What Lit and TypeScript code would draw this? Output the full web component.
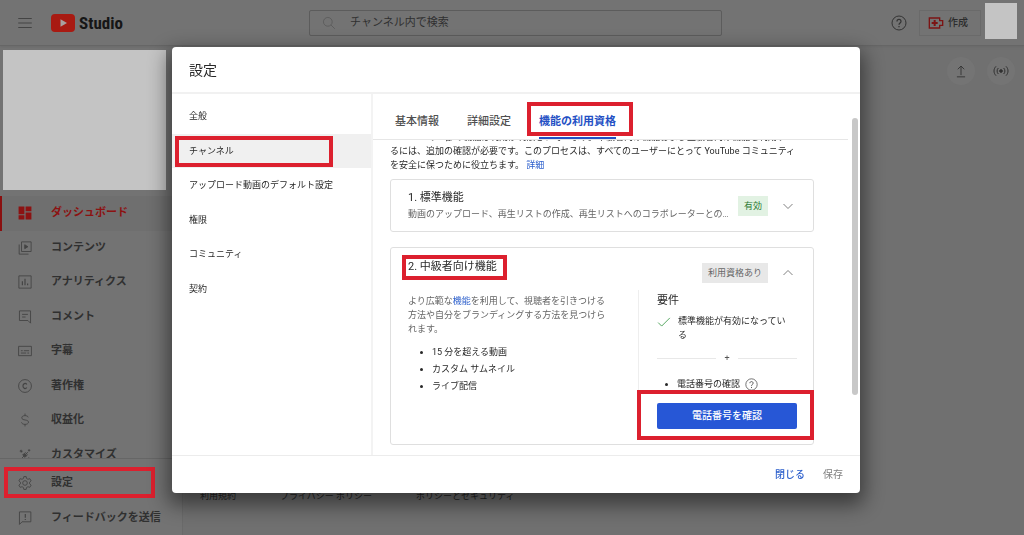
import { LitElement, html, css, svg } from "lit";
import { customElement, query, state } from "lit/decorators.js";
import { classMap } from "lit/directives/class-map.js";
import { styleMap } from "lit/directives/style-map.js";

const icons: Record<string, unknown> = {
  menu: svg`<path d="M3 6h18M3 12h18M3 18h18"/>`,
  search: svg`<circle cx="10" cy="10" r="7.5"/><path d="M15.500 15.500l6.500 6.500"/>`,
  dashboard: svg`<path fill="currentColor" stroke="none" d="M1 1h10v13H1zM13 1h10v8h-10zM1 16h10v7H1zM13 11h10v12h-10z"/>`,
  content: svg`<path d="M6 1.500h16.500v16.500H6z"/><path d="M2 6v16.500H18"/><path fill="currentColor" d="M11.500 6.500l5.500 3.300-5.500 3.300z"/>`,
  analytics: svg`<path d="M1.500 1.500h21v21h-21z"/><path stroke-width="2" d="M7.500 17.500v-7M12 17.500v-11M16.500 17.500v-3"/>`,
  comment: svg`<path d="M2.500 1.500h19v21l-4.500-4.500H2.500z"/><path d="M7 7.500h10M7 12h6"/>`,
  subtitles: svg`<path d="M1 4h22v16H1z"/><path d="M5 11.500h3M10 11.500h9M5 15.500h9M16 15.500h3"/>`,
  copyright: svg`<circle cx="12" cy="12" r="11"/><path stroke-width="2" d="M15 9.500c-2-3.500-6.500-1.500-6.500 2.500s4.500 6 6.500 2.500"/>`,
  dollar: svg`<path d="M17.500 7.500c-.5-2-2.500-3-5.500-3-3.500 0-5.500 1.500-5.500 3.800 0 5.200 11.500 2.200 11.500 7.400 0 2.300-2.500 3.800-6 3.800-3.200 0-5.500-1.200-6-3.500M12 1v3.500M12 19.500V23"/>`,
  wand: svg`<path d="M2.500 21.500L17 7M12.500 7.500l4 4M4 4l3 3M5.500 3v5M3 5.500h5M19 2v4M17 4h4M18.500 16v5M16 18.500h5"/><path fill="currentColor" d="M11 9l4 4-3 3-4-4z"/>`,
  gear: svg`<path d="M10 1h4l.7 3.300 2.300 1.300 3.300-1 2.200 3.700-2.600 2.300v2.800l2.600 2.300-2.200 3.700-3.300-1-2.300 1.300-.7 3.300h-4l-.7-3.300L7 18.400l-3.300 1-2.200-3.700 2.600-2.300v-2.800L1.500 8.300l2.200-3.700 3.300 1 2.300-1.300z"/><circle cx="12" cy="12" r="4"/>`,
  feedback: svg`<path d="M2.500 1.500h19.500v17H7l-4.500 4.500z"/><path stroke-width="2" d="M12.500 5v6.500M12.500 13.500v2"/>`,
  help: svg`<circle cx="12" cy="12" r="10.500"/><path stroke-width="1.800" d="M9 9.600c0-4 6-4 6 0 0 2.200-3 2.400-3 4.900M12 16.500v2"/>`,
  create: svg`<path stroke-width="2" d="M2 4.500h15.500v4h4.500v7h-4.500v4H2z"/><path stroke-width="3" d="M10 7.500v9M5.500 12h9"/>`,
  upload: svg`<path d="M12 19V4M6.500 9L12 3.500 17.500 9M5 22h14"/>`,
  live: svg`<circle cx="12" cy="12" r="2" fill="currentColor"/><path d="M8 7.500c-2.500 2.500-2.500 6.500 0 9M16 7.500c2.500 2.500 2.500 6.500 0 9M4.500 5c-4 4-4 10 0 14M19.500 5c4 4 4 10 0 14"/>`,
  down: svg`<path d="M3 8l9 9 9-9"/>`,
  up: svg`<path d="M3 16l9-9 9 9"/>`,
  check: svg`<path d="M2 13l6 6L22 5"/>`,
};

const icon = (name: string) => html`<svg class="icon" viewBox="0 0 24 24" aria-hidden="true">${icons[name]}</svg>`;

const shared = css`
  * { box-sizing: border-box; }
  a { color: inherit; text-decoration: none; }
  button, input { font: inherit; color: inherit; margin: 0; padding: 0; border: 0; background: none; }
  button { cursor: pointer; }
  ul { list-style: none; margin: 0; padding: 0; }
  h1, h2, h3, h4, p { margin: 0; font-weight: inherit; font-size: inherit; }
  .icon { display: block; flex: none; width: 14px; height: 14px; fill: none; stroke: currentColor; stroke-width: 1.5; }
  .marked { position: relative; }
  .marked::after { content: ""; position: absolute; border: 4px solid #dc202e; pointer-events: none; z-index: 3; }
`;

@customElement("studio-header")
class StudioHeader extends LitElement {
  static styles = [shared, css`
    :host { display: grid; grid-template-columns: 309px minmax(120px, 413px) 1fr; height: 46px; background: #737373; border-bottom: 1px solid #666; box-shadow: 0 1px 2px #6669; position: relative; z-index: 1; align-items: center; }
    .brand { display: flex; align-items: center; padding-left: 16px; }
    .menu .icon { width: 18px; height: 18px; color: #444; }
    .logo { display: flex; align-items: center; gap: 4px; margin-left: 17px; color: #161616; font: 700 17px/24px "Roboto Condensed", "Liberation Sans Narrow", Roboto, sans-serif; }
    .logo svg { width: 24px; height: 18px; display: block; }
    .search { display: flex; align-items: center; gap: 14px; height: 26px; padding: 0 12px; border: 1px solid #5c5c5c; border-radius: 2px; }
    .search .icon { color: #5a5a5a; }
    input { flex: 1; min-width: 0; height: 22px; outline: 0; }
    input::placeholder { color: #303030; opacity: 1; }
    .tools { display: flex; align-items: center; justify-content: flex-end; padding-right: 7px; }
    .help .icon { width: 16px; height: 16px; color: #333; }
    .create { display: flex; align-items: center; gap: 4px; height: 26px; width: 62px; padding-left: 8px; margin: 0 4px 0 12px; border: 1px solid #6a6a6a; font-weight: 500; color: #2c2c2c; white-space: nowrap; font-size: 10px; }
    .create .icon { width: 16px; height: 16px; color: #7c1414; }
    .avatar { width: 32px; height: 36px; background: #c4c4c4; margin-bottom: 3px; }
  `];
  render() {
    return html`
      <div class="brand">
        <button class="menu" aria-label="メニュー">${icon("menu")}</button>
        <a class="logo" href="#"><svg viewBox="0 0 24 18" aria-hidden="true"><rect width="24" height="18" rx="4" fill="#a81a12"/><path d="M9.500 5.200v7.600l6.500-3.800z" fill="#a9a09f"/></svg>Studio</a>
      </div>
      <label class="search">${icon("search")}<input type="search" placeholder="チャンネル内で検索" aria-label="チャンネル内で検索"></label>
      <div class="tools">
        <button class="help" aria-label="ヘルプ">${icon("help")}</button>
        <button class="create">${icon("create")}作成</button>
        <div class="avatar"></div>
      </div>`;
  }
}

@customElement("studio-sidebar")
class StudioSidebar extends LitElement {
  static styles = [shared, css`
    :host { display: flex; flex-direction: column; width: 183px; flex: none; min-height: 0; background: #737373; border-right: 1px solid #6a6a6a; color: #303030; font-weight: 700; }
    .profile { height: 140px; margin: 4px 16px 6px 3px; background: #c4c4c4; flex: none; }
    .main { flex: 1; min-height: 0; overflow: hidden; }
    .main ul { display: grid; grid-template-rows: repeat(8, 1fr); height: 276px; }
    .foot { border-top: 1px solid #666; padding-top: 6px; }
    .foot ul { display: grid; grid-template-rows: repeat(2, 1fr); height: 70px; }
    li, a { display: flex; align-items: center; }
    a { flex: 1; align-self: stretch; padding-left: 18px; gap: 19px; }
    .icon { color: #444; }
    .on { background: #6f6f6f; border-left: 2px solid #8a0f0f; padding-left: 16px; color: #8c1212; }
    .on .icon { color: #8c1212; }
    .marked::after { inset: 2px 27px 2px 4px; }
  `];
  private items = [["dashboard", "ダッシュボード"], ["content", "コンテンツ"], ["analytics", "アナリティクス"], ["comment", "コメント"], ["subtitles", "字幕"], ["copyright", "著作権"], ["dollar", "収益化"], ["wand", "カスタマイズ"]];
  render() {
    return html`
      <div class="profile"></div>
      <nav class="main"><ul>${this.items.map(([i, t], n) => html`<li><a href="#" class=${classMap({ on: n === 0 })}>${icon(i)}${t}</a></li>`)}</ul></nav>
      <div class="foot"><ul>
        <li class="marked"><a href="#">${icon("gear")}設定</a></li>
        <li><a href="#">${icon("feedback")}フィードバックを送信</a></li>
      </ul></div>`;
  }
}

@customElement("settings-dialog")
class SettingsDialog extends LitElement {
  @state() private section = 1;
  @state() private tab = 2;
  @state() private thumb = { top: 0, size: 100 };
  @query(".panel") private panel!: HTMLElement;
  static styles = [shared, css`
    :host { display: flex; flex-direction: column; width: 100%; max-width: 688px; height: 100%; background: #fff; border-radius: 4px; box-shadow: 0 8px 20px 4px #0000007a; color: #282828; font-size: 9px; line-height: 14px; overflow: hidden; }
    .title { flex: none; height: 47px; padding-left: 17px; border-bottom: 2px solid #f1f1f1; font-size: 14px; line-height: 47px; }
    .body { flex: 1; min-height: 0; display: flex; }
    .sections { flex: none; width: 201px; border-right: 2px solid #f3f3f3; padding-top: 5px; }
    .sections ul { display: grid; grid-template-rows: repeat(6, 1fr); height: 207px; }
    li { display: flex; }
    .sections button { flex: 1; text-align: left; padding-left: 17px; }
    .sections .on { background: #f0f0f0; }
    .sections .marked::after { inset: 2px 38px 1px 3px; }
    .panel { flex: 1; min-width: 0; overflow-y: scroll; scrollbar-width: none; }
    .track { flex: none; width: 12px; padding: 0 2px 0 4px; }
    .thumb { position: relative; background: #c8c8c8; border-radius: 3px; }
    .tabs { position: sticky; top: 0; z-index: 4; display: flex; gap: 28px; height: 46px; padding-left: 22px; background: #fff; border-bottom: 1px solid #e6e6e6; font-size: 11px; font-weight: 500; color: #505050; }
    .tabs button { padding-top: 10px; }
    .tabs .on { color: #2450c4; font-weight: 700; box-shadow: inset 0 -2px #2450c4; }
    .tabs .marked::after { inset: 8px -17px 3px -12px; }
    .content { padding: 21px 34px 88px 17px; }
    a { color: #2c5fcc; }
    .card { display: block; border: 1px solid #dfdfdf; border-radius: 3px; padding: 0 16px 0 17px; }
    .card + .card { margin-top: 15px; }
    .intro { margin-bottom: 7px; }
    .head { display: flex; align-items: center; padding-right: 3px; }
    .head > div { flex: 1; min-width: 0; }
    h3 { font-size: 11px; line-height: 16px; font-weight: 400; }
    .sub { color: #646464; overflow: hidden; text-overflow: ellipsis; white-space: nowrap; }
    .badge { flex: none; padding: 3px 6px; margin: 0 14px 0 6px; }
    .ok { background: #e2f2e3; color: #2c7a34; }
    .can { background: #e8e8e8; color: #666; }
    .head .icon { width: 12px; height: 12px; color: #555; }
    .c1 .head { height: 51px; }
    .c1 .sub { margin-top: 1px; }
    .c2 { padding-bottom: 15px; }
    .c2 .head { height: 42px; padding-top: 8px; }
    .c2 h3 { width: max-content; margin-bottom: 12px; }
    .c2 h3::after { inset: -4px -10px -5px -6px; }
    .cols { display: grid; grid-template-columns: 1fr 159px; }
    .desc { padding: 4px 24px 0 0; color: #646464; }
    .bul { list-style: disc; color: #282828; padding-left: 24px; }
    .bul li { display: list-item; line-height: 17px; }
    .desc .bul { margin-top: 8px; }
    .req { border-left: 1px solid #eee; padding: 3px 0 0 18px; }
    h4 { font-size: 11px; line-height: 16px; margin-bottom: 5px; }
    .done { display: flex; gap: 7px; }
    .done .icon { color: #3f9a4c; margin-top: 1px; }
    .plus { display: flex; align-items: center; gap: 8px; margin: 9px 0 11px; color: #555; }
    .plus::before, .plus::after { content: ""; flex: 1; height: 1px; background: #e8e8e8; }
    .req .bul { padding-left: 20px; }
    .row { display: flex; align-items: center; gap: 5px; height: 17px; }
    .row .icon { width: 13px; height: 13px; color: #555; }
    .verify { display: block; width: 100%; margin-top: 10px; }
    .verify button { display: block; width: 100%; height: 26px; background: #2757d6; color: #fff; border-radius: 2px; font-size: 10px; font-weight: 500; }
    .verify::after { inset: -13px -17px -11px -20px; }
    .actions { flex: none; height: 38px; display: flex; justify-content: flex-end; align-items: center; gap: 18px; padding-right: 17px; border-top: 1px solid #ececec; font-size: 10px; }
    .close { color: #2c5fcc; font-weight: 500; }
    .save { color: #808080; }
  `];
  firstUpdated() {
    this.panel.scrollTop = 31;
    this.measure();
  }
  private measure() {
    const { scrollTop, scrollHeight, clientHeight } = this.panel;
    this.thumb = { top: (scrollTop / scrollHeight) * 100, size: (clientHeight / scrollHeight) * 100 };
  }
  private sections = ["全般", "チャンネル", "アップロード動画のデフォルト設定", "権限", "コミュニティ", "契約"];
  private tabs = ["基本情報", "詳細設定", "機能の利用資格"];
  render() {
    return html`
      <h2 class="title">設定</h2>
      <div class="body">
        <nav class="sections"><ul>${this.sections.map((t, i) => html`<li class=${classMap({ marked: i === 1 })}><button class=${classMap({ on: i === this.section })} @click=${() => (this.section = i)}>${t}</button></li>`)}</ul></nav>
        <div class="panel" @scroll=${this.measure}>
          <div class="tabs" role="tablist">${this.tabs.map((t, i) => html`<button role="tab" aria-selected=${i === this.tab} class=${classMap({ on: i === this.tab, marked: i === 2 })} @click=${() => (this.tab = i)}>${t}</button>`)}</div>
          <div class="content">
            <p class="intro">YouTube の一部の機能は利用が制限されています。中級者向け機能および上級者向け機能を利用す<br>るには、追加の確認が必要です。このプロセスは、すべてのユーザーにとって YouTube コミュニティ<br>を安全に保つために役立ちます。 <a href="#">詳細</a></p>
            <section class="card c1"><div class="head">
              <div><h3>1. 標準機能</h3><p class="sub">動画のアップロード、再生リストの作成、再生リストへのコラボレーターとの共同編集</p></div>
              <span class="badge ok">有効</span><button aria-label="開く">${icon("down")}</button>
            </div></section>
            <section class="card c2">
              <div class="head"><div><h3 class="marked">2. 中級者向け機能</h3></div><span class="badge can">利用資格あり</span><button aria-label="折りたたむ">${icon("up")}</button></div>
              <div class="cols">
                <div class="desc"><p>より広範な<a href="#">機能</a>を利用して、視聴者を引きつける<br>方法や自分をブランディングする方法を見つけら<br>れます。</p>
                  <ul class="bul"><li>15 分を超える動画</li><li>カスタム サムネイル</li><li>ライブ配信</li></ul></div>
                <div class="req"><h4>要件</h4>
                  <div class="done">${icon("check")}<span>標準機能が有効になってい<br>る</span></div>
                  <div class="plus">+</div>
                  <ul class="bul"><li><span class="row">電話番号の確認 ${icon("help")}</span></li></ul>
                  <div class="verify marked"><button>電話番号を確認</button></div>
                </div>
              </div>
            </section>
          </div>
        </div>
        <div class="track" aria-hidden="true"><div class="thumb" style=${styleMap({ top: `${this.thumb.top}%`, height: `${this.thumb.size}%` })}></div></div>
      </div>
      <div class="actions"><button class="close">閉じる</button><button class="save" disabled>保存</button></div>`;
  }
}

@customElement("app-root")
class AppRoot extends LitElement {
  static styles = [shared, css`
    :host { display: flex; flex-direction: column; height: 100vh; background: #707070; font-family: Roboto, "Noto Sans CJK JP", sans-serif; font-size: 11px; line-height: 16px; color: #2c2c2c; overflow: hidden; }
    .under { flex: 1; min-height: 0; display: flex; }
    main { flex: 1; min-width: 0; display: flex; flex-direction: column; justify-content: space-between; padding: 11px 9px 32px 17px; }
    .quick { display: flex; justify-content: flex-end; gap: 12px; }
    .quick button { width: 28px; height: 28px; border-radius: 50%; background: #747474; display: grid; place-items: center; color: #303030; }
    .live .icon { width: 16px; height: 16px; }
    .links { display: flex; gap: 44px; font-size: 9px; line-height: 14px; color: #242424; }
    .overlay { position: fixed; inset: 0; z-index: 5; display: flex; justify-content: center; padding: 47px 32px 42px 40px; }
  `];
  render() {
    return html`
      <studio-header lang="ja"></studio-header>
      <div class="under" lang="ja">
        <studio-sidebar></studio-sidebar>
        <main>
          <div class="quick"><button aria-label="アップロード">${icon("upload")}</button><button class="live" aria-label="ライブ配信">${icon("live")}</button></div>
          <div class="links"><a href="#">利用規約</a><a href="#">プライバシー ポリシー</a><a href="#">ポリシーとセキュリティ</a></div>
        </main>
      </div>
      <div class="overlay" lang="ja"><settings-dialog role="dialog" aria-label="設定"></settings-dialog></div>`;
  }
}
